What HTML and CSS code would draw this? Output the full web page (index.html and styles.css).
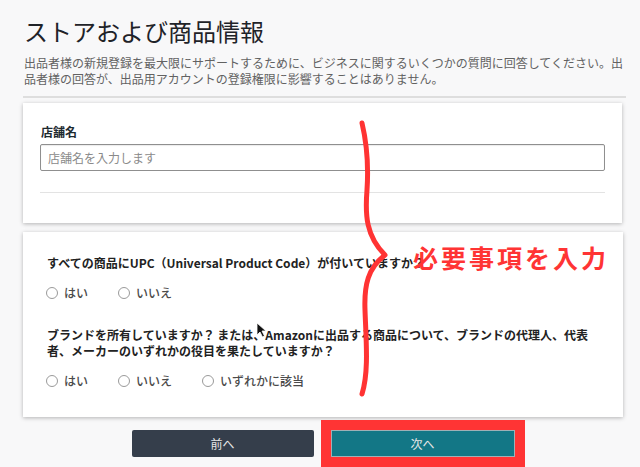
FILE: index.html
```html
<!DOCTYPE html>
<html lang="ja">
<head>
<meta charset="utf-8">
<link rel="stylesheet" href="styles.css">
</head>
<body>
<div class="page">
  <h1 class="title">ストアおよび商品情報</h1>
  <p class="desc">出品者様の新規登録を最大限にサポートするために、ビジネスに関するいくつかの質問に回答してください。出品者様の回答が、出品用アカウントの登録権限に影響することはありません。</p>
  <div class="rule"></div>

  <section class="card card-store">
    <div class="label">店舗名</div>
    <div class="input">店舗名を入力します</div>
    <div class="card-rule"></div>
  </section>

  <section class="card card-questions">
    <div class="question">すべての商品にUPC（Universal Product Code）が付いていますか？</div>
    <div class="options">
      <span class="option"><span class="radio"></span>はい</span>
      <span class="option"><span class="radio"></span>いいえ</span>
    </div>
    <div class="question q2">ブランドを所有していますか？ または、Amazonに出品する商品について、ブランドの代理人、代表<br>者、メーカーのいずれかの役目を果たしていますか？</div>
    <div class="options">
      <span class="option"><span class="radio"></span>はい</span>
      <span class="option"><span class="radio"></span>いいえ</span>
      <span class="option"><span class="radio"></span>いずれかに該当</span>
    </div>
  </section>

  <div class="actions">
    <button class="btn btn-prev">前へ</button>
    <button class="btn btn-next">次へ<span class="highlight"></span></button>
  </div>
</div>

<svg class="brace" width="640" height="467" viewBox="0 0 640 467">
  <path d="M362,123 C366,140 369,160 367,190 C365,215 366,236 385,255 C368,268 364,285 365,310 C366,340 369,372 362,394" fill="none" stroke="#ff3333" stroke-width="5" stroke-linecap="round" stroke-linejoin="round"/>
</svg>
<div class="note">必要事項を入力</div>

<svg class="cursor" width="12" height="16" viewBox="0 0 12 16">
  <path d="M1,1 L1,13 L4,10 L6.5,15 L8.5,14 L6,9 L10,9 Z" fill="#111" stroke="#fff" stroke-width="0.8"/>
</svg>
</body>
</html>
```

FILE: styles.css
```css
html, body {
  margin: 0;
  padding: 0;
}
body {
  position: relative;
  width: 640px;
  height: 467px;
  overflow: hidden;
  background: #f8f8f9;
  font-family: "Noto Sans CJK JP", "Noto Sans", sans-serif;
  color: #222;
}
.page {
  padding: 0 14px 0 23px;
}
.title {
  margin: 0;
  padding: 14px 0 0 1px;
  font-size: 24px;
  line-height: 34px;
  font-weight: 400;
  color: #1f2328;
}
.desc {
  margin: 7px 0 0 1px;
  font-size: 12px;
  line-height: 16px;
  color: #626262;
  width: 602px;
}
.rule {
  margin-top: 9px;
  height: 2px;
  background: #dedede;
}
.card {
  background: #fff;
  box-shadow: 0 1px 4px rgba(0, 0, 0, 0.28);
  width: 599px;
  box-sizing: border-box;
}
.card-store {
  margin-top: 5px;
  height: 120px;
  padding: 21px 17px 0 17px;
}
.label {
  font-size: 12px;
  line-height: 16px;
  font-weight: 700;
  color: #1d2a2f;
  padding-left: 1px;
}
.input {
  margin-top: 4px;
  height: 27px;
  box-sizing: border-box;
  border: 1px solid #8f8f8f;
  border-radius: 2px;
  box-shadow: inset 0 1px 1px rgba(0, 0, 0, 0.08);
  padding-left: 7px;
  font-size: 12px;
  line-height: 25px;
  color: #8a8a8a;
}
.card-rule {
  margin-top: 21px;
  height: 1px;
  background: #e3e3e3;
}
.card-questions {
  margin-top: 9px;
  width: 600px;
  height: 185px;
  padding: 22px 24px 0 24px;
}
.question {
  font-size: 12px;
  line-height: 17px;
  font-weight: 700;
  color: #222;
}
.q2 {
  margin-top: 26px;
  line-height: 16px;
}
.options {
  margin-top: 14px;
  display: flex;
  gap: 31px;
  height: 16px;
  align-items: center;
}
.option {
  display: flex;
  align-items: center;
  gap: 6px;
  font-size: 12px;
  font-weight: 500;
  color: #4a4a4a;
  line-height: 16px;
}
.radio {
  width: 12px;
  height: 12px;
  box-sizing: border-box;
  border: 1px solid #9a9a9a;
  border-radius: 50%;
  background: #fff;
  margin-left: -1px;
}
.actions {
  width: 600px;
  margin-top: 13px;
  display: flex;
  justify-content: center;
  gap: 17px;
}
.btn {
  position: relative;
  height: 27px;
  border: 0;
  border-radius: 2px;
  font-family: inherit;
  font-size: 12px;
  color: #e6e6e6;
  padding: 0;
}
.btn-prev {
  width: 182px;
  background: #353e4b;
}
.btn-next {
  width: 184px;
  background: #137786;
  border: 1px solid #9fb0b6;
  border-radius: 0;
}
.highlight {
  position: absolute;
  left: -11px;
  right: -11px;
  top: -11px;
  bottom: -11px;
  border: 10px solid #ff3434;
}
.brace {
  position: absolute;
  left: 0;
  top: 0;
  pointer-events: none;
}
.note {
  position: absolute;
  left: 413px;
  top: 241px;
  font-size: 25px;
  line-height: 32px;
  font-weight: 700;
  letter-spacing: 3px;
  color: #ff3434;
  white-space: nowrap;
}
.cursor {
  position: absolute;
  left: 256px;
  top: 322px;
}
```
